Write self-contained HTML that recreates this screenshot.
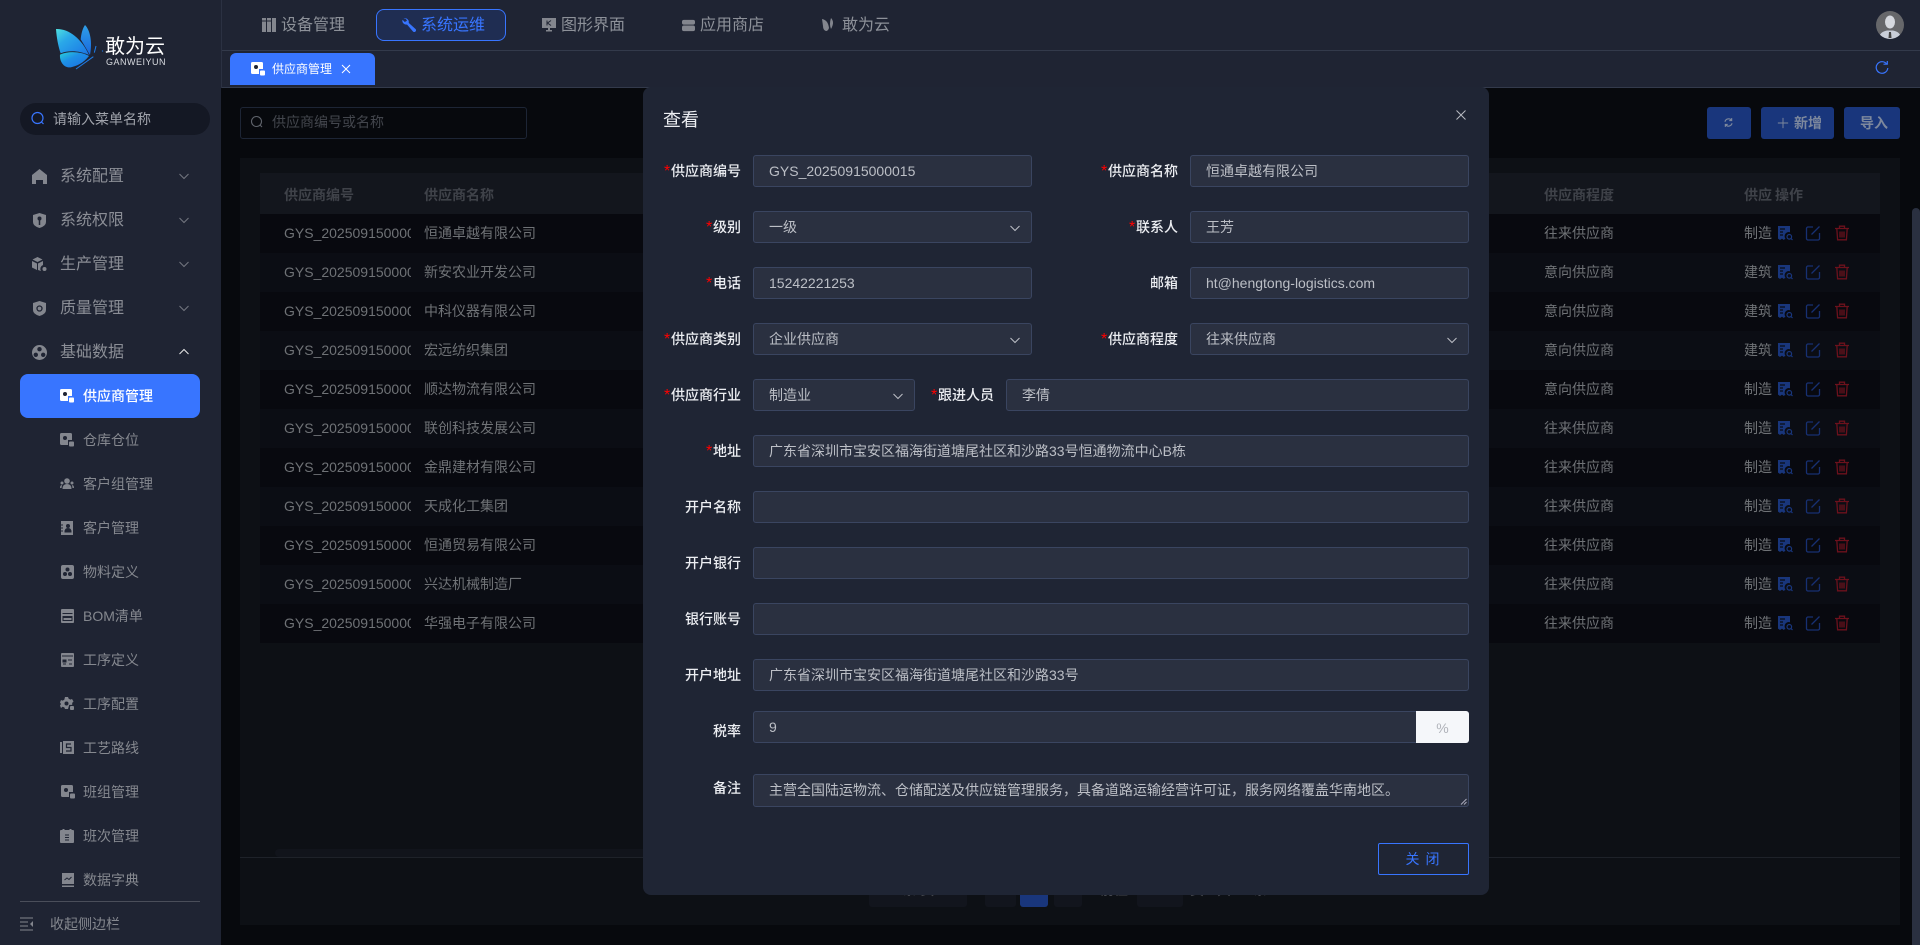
<!DOCTYPE html>
<html lang="zh">
<head>
<meta charset="utf-8">
<title>供应商管理</title>
<style>
*{box-sizing:border-box;margin:0;padding:0}
html,body{width:1920px;height:945px;overflow:hidden;background:#07090d}
body{position:relative;font-family:"Liberation Sans","WenQuanYi Zen Hei","Noto Sans CJK SC",sans-serif;font-size:14px}
.a{position:absolute;white-space:nowrap}
.t{position:absolute;white-space:nowrap;line-height:20px}
#side{position:absolute;left:0;top:0;width:221px;height:945px;background:#1f2433}
#top{position:absolute;left:221px;top:0;width:1699px;height:88px;background:#1f2433}
.m1{color:#8b8e96;font-size:16px;left:60px}
.m2{color:#85888f;font-size:14px;left:83px}
.nav{font-size:16px;color:#8d9199;top:16px}
svg{position:absolute;display:block}
.ic{fill:#83868e}
.row{position:absolute;left:260px;width:1620px;height:39px}
.c1,.c2,.c3,.c4{position:absolute;top:9px;line-height:20px;color:#6f7276;white-space:nowrap;overflow:hidden}
.c1{left:24px;width:127px}
.c2{left:164px}
.c3{left:1284px}
.c4{left:1484px;width:28px}
.th{position:absolute;top:185px;font-weight:700;color:#3f4249;line-height:20px;white-space:nowrap}
.f{position:absolute;height:32px;background:#2a3040;border:1px solid #3a4560;border-radius:3px;color:#bcbfc6;line-height:30px;padding-left:15px;white-space:nowrap}
.l{position:absolute;color:#eceef2;line-height:20px;text-align:right;white-space:nowrap;font-weight:500}
.l b{display:inline-block;width:7px;color:#f00;font-weight:400;font-size:16px;line-height:14px;text-align:left}
.ch{position:absolute;right:10px;top:10px}
</style>
</head>
<body>
<svg width="0" height="0" style="position:absolute">
<defs>
<symbol id="doc" viewBox="0 0 16 16"><path d="M1 1h12v6.200a4.200 4.200 0 0 0-3.400 7.600L8.400 13.600 6.800 15 5 13.600 3 15 1 13.600z" fill="#19367c"/><path d="M3 4h5M3 7h3M3 10h3" stroke="#0a0d14" stroke-width="1.200"/><circle cx="12.300" cy="11.800" r="2.300" fill="none" stroke="#19367c" stroke-width="1.200"/><path d="M14 13.500l1.500 1.500" stroke="#19367c" stroke-width="1.200"/></symbol>
<symbol id="edit" viewBox="0 0 16 16"><path d="M8 2H3a1.500 1.500 0 0 0-1.500 1.500v10A1.500 1.500 0 0 0 3 15h10a1.500 1.500 0 0 0 1.500-1.500V8M6.500 9.500L14.500 1.500" fill="none" stroke="#173072" stroke-width="1.300"/></symbol>
<symbol id="del" viewBox="0 0 16 16"><path d="M1 3.500h14M5.500 3.500V1.200h5v2.300M2.800 3.500l.8 11.300h8.800l.8-11.300M6 6.500v6M8 6.500v6M10 6.500v6" fill="none" stroke="#6c111c" stroke-width="1.300"/></symbol>
<symbol id="sub" viewBox="0 0 14 14"><path d="M1.500 0h9A1.500 1.500 0 0 1 12 1.500V7H8v5H1.500A1.500 1.500 0 0 1 0 10.500v-9A1.500 1.500 0 0 1 1.500 0z" fill="currentColor"/><circle cx="5" cy="5" r="2" fill="#1f2433"/><rect x="9" y="8.500" width="5" height="5" rx="1" fill="currentColor"/></symbol>
<symbol id="down" viewBox="0 0 12 12"><path d="M1.500 4l4.500 4.500L10.500 4" fill="none" stroke="currentColor" stroke-width="1"/></symbol>
</defs>
</svg>

<!-- content area -->
<div class="a" style="left:240px;top:107px;width:287px;height:32px;border:1px solid #1d2535;border-radius:3px"></div>
<svg style="left:250px;top:115px" width="14" height="14" viewBox="0 0 14 14"><circle cx="6.500" cy="6.500" r="5" fill="none" stroke="#5f636b" stroke-width="1.100"/><path d="M10 10l2 2" stroke="#5f636b" stroke-width="1.100"/></svg>
<div class="t" style="left:272px;top:112px;color:#43464d">供应商编号或名称</div>
<div class="a" style="left:1707px;top:107px;width:44px;height:32px;background:#19367c;border-radius:3px"></div>
<svg style="left:1723px;top:117px" width="11" height="11" viewBox="0 0 14 14"><path d="M2.500 6a4.700 4.700 0 0 1 8.300-1.800M11.500 8a4.700 4.700 0 0 1-8.300 1.800M11 1.500v3H8M3 12.500v-3h3" fill="none" stroke="#7d889d" stroke-width="1.500"/></svg>
<div class="a" style="left:1761px;top:107px;width:73px;height:32px;background:#19367c;border-radius:3px"></div>
<svg style="left:1777px;top:117px" width="12" height="12" viewBox="0 0 14 14"><path d="M7 1v12M1 7h12" stroke="#7d889d" stroke-width="1.100"/></svg>
<div class="t" style="left:1794px;top:113px;color:#7d889d;font-weight:700">新增</div>
<div class="a" style="left:1844px;top:107px;width:56px;height:32px;background:#19367c;border-radius:3px"></div>
<div class="t" style="left:1860px;top:113px;color:#7d889d;font-weight:700">导入</div>

<div class="a" style="left:240px;top:158px;width:1660px;height:767px;background:#0d1015"></div>
<div class="a" style="left:260px;top:173px;width:1620px;height:41px;background:#13161d"></div>
<div class="th" style="left:284px">供应商编号</div>
<div class="th" style="left:424px">供应商名称</div>
<div class="th" style="left:1544px">供应商程度</div>
<div class="th" style="left:1744px;width:28px;overflow:hidden">供应商行业</div>
<div class="th" style="left:1775px">操作</div>

<div class="row" style="top:214px;background:#08090f"><div class="c1">GYS_20250915000015</div><div class="c2">恒通卓越有限公司</div><div class="c3">往来供应商</div><div class="c4">制造业</div></div>
<div class="row" style="top:253px;background:#0b0d14"><div class="c1">GYS_20250915000014</div><div class="c2">新安农业开发公司</div><div class="c3">意向供应商</div><div class="c4">建筑业</div></div>
<div class="row" style="top:292px;background:#08090f"><div class="c1">GYS_20250915000013</div><div class="c2">中科仪器有限公司</div><div class="c3">意向供应商</div><div class="c4">建筑业</div></div>
<div class="row" style="top:331px;background:#0b0d14"><div class="c1">GYS_20250915000012</div><div class="c2">宏远纺织集团</div><div class="c3">意向供应商</div><div class="c4">建筑业</div></div>
<div class="row" style="top:370px;background:#08090f"><div class="c1">GYS_20250915000011</div><div class="c2">顺达物流有限公司</div><div class="c3">意向供应商</div><div class="c4">制造业</div></div>
<div class="row" style="top:409px;background:#0b0d14"><div class="c1">GYS_20250915000010</div><div class="c2">联创科技发展公司</div><div class="c3">往来供应商</div><div class="c4">制造业</div></div>
<div class="row" style="top:448px;background:#08090f"><div class="c1">GYS_20250915000009</div><div class="c2">金鼎建材有限公司</div><div class="c3">往来供应商</div><div class="c4">制造业</div></div>
<div class="row" style="top:487px;background:#0b0d14"><div class="c1">GYS_20250915000008</div><div class="c2">天成化工集团</div><div class="c3">往来供应商</div><div class="c4">制造业</div></div>
<div class="row" style="top:526px;background:#08090f"><div class="c1">GYS_20250915000007</div><div class="c2">恒通贸易有限公司</div><div class="c3">往来供应商</div><div class="c4">制造业</div></div>
<div class="row" style="top:565px;background:#0b0d14"><div class="c1">GYS_20250915000006</div><div class="c2">兴达机械制造厂</div><div class="c3">往来供应商</div><div class="c4">制造业</div></div>
<div class="row" style="top:604px;background:#08090f"><div class="c1">GYS_20250915000005</div><div class="c2">华强电子有限公司</div><div class="c3">往来供应商</div><div class="c4">制造业</div></div>

<svg style="left:1777px;top:225px" width="16" height="16"><use href="#doc"/></svg><svg style="left:1805px;top:225px" width="16" height="16"><use href="#edit"/></svg><svg style="left:1834px;top:225px" width="16" height="16"><use href="#del"/></svg>
<svg style="left:1777px;top:264px" width="16" height="16"><use href="#doc"/></svg><svg style="left:1805px;top:264px" width="16" height="16"><use href="#edit"/></svg><svg style="left:1834px;top:264px" width="16" height="16"><use href="#del"/></svg>
<svg style="left:1777px;top:303px" width="16" height="16"><use href="#doc"/></svg><svg style="left:1805px;top:303px" width="16" height="16"><use href="#edit"/></svg><svg style="left:1834px;top:303px" width="16" height="16"><use href="#del"/></svg>
<svg style="left:1777px;top:342px" width="16" height="16"><use href="#doc"/></svg><svg style="left:1805px;top:342px" width="16" height="16"><use href="#edit"/></svg><svg style="left:1834px;top:342px" width="16" height="16"><use href="#del"/></svg>
<svg style="left:1777px;top:381px" width="16" height="16"><use href="#doc"/></svg><svg style="left:1805px;top:381px" width="16" height="16"><use href="#edit"/></svg><svg style="left:1834px;top:381px" width="16" height="16"><use href="#del"/></svg>
<svg style="left:1777px;top:420px" width="16" height="16"><use href="#doc"/></svg><svg style="left:1805px;top:420px" width="16" height="16"><use href="#edit"/></svg><svg style="left:1834px;top:420px" width="16" height="16"><use href="#del"/></svg>
<svg style="left:1777px;top:459px" width="16" height="16"><use href="#doc"/></svg><svg style="left:1805px;top:459px" width="16" height="16"><use href="#edit"/></svg><svg style="left:1834px;top:459px" width="16" height="16"><use href="#del"/></svg>
<svg style="left:1777px;top:498px" width="16" height="16"><use href="#doc"/></svg><svg style="left:1805px;top:498px" width="16" height="16"><use href="#edit"/></svg><svg style="left:1834px;top:498px" width="16" height="16"><use href="#del"/></svg>
<svg style="left:1777px;top:537px" width="16" height="16"><use href="#doc"/></svg><svg style="left:1805px;top:537px" width="16" height="16"><use href="#edit"/></svg><svg style="left:1834px;top:537px" width="16" height="16"><use href="#del"/></svg>
<svg style="left:1777px;top:576px" width="16" height="16"><use href="#doc"/></svg><svg style="left:1805px;top:576px" width="16" height="16"><use href="#edit"/></svg><svg style="left:1834px;top:576px" width="16" height="16"><use href="#del"/></svg>
<svg style="left:1777px;top:615px" width="16" height="16"><use href="#doc"/></svg><svg style="left:1805px;top:615px" width="16" height="16"><use href="#edit"/></svg><svg style="left:1834px;top:615px" width="16" height="16"><use href="#del"/></svg>

<div class="a" style="left:275px;top:849px;width:900px;height:8px;background:#11141b;border-radius:4px"></div>
<div class="a" style="left:240px;top:857px;width:1660px;height:1px;background:#1e2229"></div>
<!-- pagination peeking under modal -->
<div class="a" style="left:869px;top:875px;width:98px;height:32px;background:#12151d;border-radius:3px"></div>
<div class="a" style="left:985px;top:875px;width:31px;height:32px;background:#12151d;border-radius:3px"></div>
<div class="a" style="left:1020px;top:875px;width:28px;height:32px;background:#19367c;border-radius:3px"></div>
<div class="a" style="left:1054px;top:875px;width:28px;height:32px;background:#12151d;border-radius:3px"></div>
<div class="a" style="left:1137px;top:875px;width:46px;height:32px;background:#12151d;border-radius:3px"></div>
<div class="t" style="left:887px;top:880px;color:#45484f">20条/页</div>
<div class="t" style="left:1100px;top:880px;color:#45484f">前往</div>
<div class="t" style="left:1190px;top:880px;color:#45484f">页</div>
<div class="t" style="left:1217px;top:880px;color:#45484f">共 11 条</div>
<!-- scrollbar -->
<div class="a" style="left:1912px;top:208px;width:8px;height:737px;background:#2a3040;border-radius:4px 4px 0 0"></div>

<!-- top bar -->
<div id="top"></div>
<div class="a" style="left:221px;top:50px;width:1699px;height:1px;background:#333a4b"></div>
<div class="a" style="left:221px;top:87px;width:1699px;height:1px;background:#333a4b"></div>
<div class="a" style="left:221px;top:0;width:1px;height:88px;background:#2b3142"></div>

<svg class="ic" style="left:262px;top:18px" width="14" height="14" viewBox="0 0 14 14"><rect x="0" y="0" width="4" height="14"/><rect x="5" y="0" width="4" height="14"/><rect x="10" y="0" width="4" height="14"/><path d="M0 3h4M5 3h4" stroke="#1f2433"/></svg>
<div class="t nav" style="left:281px">设备管理</div>
<div class="a" style="left:376px;top:9px;width:130px;height:32px;background:#1f2d52;border:1px solid #3875ff;border-radius:8px"></div>
<svg style="left:402px;top:18px" width="14" height="14" viewBox="0 0 14 14"><path d="M1.500 0.500a3.800 3.800 0 0 1 5.200 4.400L13.500 11a1.700 1.700 0 0 1-2.500 2.500L5 6.500A3.800 3.800 0 0 1 .5 1.800L2.800 4 5 2.800 3.800 .8z" fill="#3875ff"/></svg>
<div class="t nav" style="left:421px;color:#3875ff">系统运维</div>
<svg class="ic" style="left:542px;top:18px" width="14" height="14" viewBox="0 0 14 14"><path d="M0 0h14v10H8v2h2v1.500H4V12h2v-2H0z"/><path d="M5 2.500v5M9 2.500L5.500 5 9 7.500" stroke="#1f2433" fill="none"/></svg>
<div class="t nav" style="left:561px">图形界面</div>
<svg class="ic" style="left:682px;top:19px" width="13" height="13" viewBox="0 0 14 14"><rect x="0" y="1" width="14" height="5" rx="2"/><rect x="0" y="7" width="14" height="6" rx="2"/></svg>
<div class="t nav" style="left:700px">应用商店</div>
<svg class="ic" style="left:822px;top:18px" width="14" height="14" viewBox="0 0 14 14"><path d="M0 1q6 1 7 9-1 3-3 3-3-1-3-5zM9 0q4 4 0 11-2-5 0-11z"/></svg>
<div class="t nav" style="left:842px">敢为云</div>

<svg style="left:1876px;top:11px" width="28" height="28" viewBox="0 0 28 28"><clipPath id="av"><circle cx="14" cy="14" r="14"/></clipPath><g clip-path="url(#av)"><rect width="28" height="28" fill="#66676a"/><ellipse cx="14" cy="11" rx="5" ry="6.500" fill="#d5d8de"/><path d="M3 28q0-7 8-8.500h6q8 1.500 8 8.500z" fill="#c9ced8"/><path d="M13 21h2l.5 6h-3z" fill="#444"/></g></svg>

<!-- tab -->
<div class="a" style="left:230px;top:53px;width:145px;height:32px;background:#3875ff;border-radius:6px 6px 0 0"></div>
<svg style="left:251px;top:62px;color:#fff" width="14" height="14"><use href="#sub"/></svg>
<div class="t" style="left:272px;top:59px;font-size:12px;color:#fff">供应商管理</div>
<svg style="left:341px;top:64px" width="10" height="10" viewBox="0 0 10 10"><path d="M1 1l8 8M9 1l-8 8" stroke="#fff" stroke-width="1"/></svg>
<svg style="left:1875px;top:61px" width="14" height="14" viewBox="0 0 14 14"><path d="M11.800 3.200A5.800 5.800 0 1 0 12.800 7" fill="none" stroke="#3875ff" stroke-width="1.200"/><path d="M8.500 3.200h3.800V0" fill="none" stroke="#3875ff" stroke-width="1.200"/></svg>

<!-- sidebar -->
<div id="side"></div>
<svg style="left:40px;top:10px" width="150" height="70" viewBox="0 0 450 210">
<defs>
<linearGradient id="g1" x1="0" y1="0" x2="1" y2="1"><stop offset="0" stop-color="#4fe0e0"/><stop offset=".35" stop-color="#2aa8e8"/><stop offset="1" stop-color="#1a74e6"/></linearGradient>
<linearGradient id="g2" x1="0" y1="0" x2="0" y2="1"><stop offset="0" stop-color="#2f9fe8"/><stop offset="1" stop-color="#1868de"/></linearGradient>
<linearGradient id="g3" x1="0" y1="0" x2="1" y2="1"><stop offset="0" stop-color="#2ad0d8"/><stop offset=".4" stop-color="#1e90e6"/><stop offset="1" stop-color="#1a6de0"/></linearGradient>
</defs>
<path d="M135 45C150 60 158 95 150 135C140 118 130 100 122 88C124 70 128 55 135 45z" fill="url(#g2)"/>
<path d="M48 57C85 55 125 85 147 135C120 122 85 120 62 130C55 110 50 85 48 57z" fill="url(#g1)"/>
<path d="M60 134C85 122 125 125 147 138C130 160 110 168 92 172C72 175 58 155 60 134z" fill="url(#g3)"/>
<path d="M108 177L160 140M168 108L163 128M186 124l3-2" stroke="#1f7de8" stroke-width="3" fill="none"/>
</svg>
<div class="t" style="left:105px;top:35px;font-size:20px;line-height:24px;color:#fff">敢为云</div>
<div class="t" style="left:106px;top:56px;font-size:9px;line-height:12px;color:#d8dbe0;letter-spacing:.5px">GANWEIYUN</div>

<div class="a" style="left:20px;top:103px;width:190px;height:32px;background:#141824;border-radius:16px"></div>
<svg style="left:31px;top:111px" width="14" height="15" viewBox="0 0 14 15"><circle cx="6.500" cy="7" r="5.500" fill="none" stroke="#3875ff" stroke-width="1.200"/><path d="M10.500 11l2 2" stroke="#3875ff" stroke-width="1.200"/></svg>
<div class="t" style="left:53px;top:109px;color:#a0a3ab">请输入菜单名称</div>

<svg class="ic" style="left:32px;top:169px" width="15" height="15" viewBox="0 0 15 15"><path d="M7.500 0L15 6v9h-4v-4H4v4H0V6z"/></svg>
<div class="t m1" style="top:167px">系统配置</div>
<svg class="ic" style="left:32px;top:213px" width="15" height="15" viewBox="0 0 15 15"><path d="M7.500 0l6.500 2v7q0 4-6.500 6Q1 13 1 9V2z"/><circle cx="7.500" cy="5.500" r="2" fill="#1f2433"/><path d="M7.500 7v5" stroke="#1f2433" stroke-width="1.500"/></svg>
<div class="t m1" style="top:211px">系统权限</div>
<svg class="ic" style="left:32px;top:257px" width="15" height="15" viewBox="0 0 15 15"><path d="M5.500 0l5 2.500-5 2.500-5-2.500zM0 4l5 2.500V13l-5-2.500zM6 6.500L11 4v4a4 4 0 0 0-2 6l-3-1z"/><circle cx="12.500" cy="12" r="2"/></svg>
<div class="t m1" style="top:255px">生产管理</div>
<svg class="ic" style="left:32px;top:301px" width="15" height="15" viewBox="0 0 15 15"><path d="M7.500 0l6.500 2v7q0 4-6.500 6Q1 13 1 9V2z"/><circle cx="7.500" cy="7.500" r="2.500" fill="none" stroke="#1f2433" stroke-width="1.300"/></svg>
<div class="t m1" style="top:299px">质量管理</div>
<svg class="ic" style="left:32px;top:345px" width="15" height="15" viewBox="0 0 15 15"><circle cx="7.500" cy="7.500" r="7.500"/><circle cx="7.500" cy="4.200" r="2.200" fill="#1f2433"/><circle cx="3.800" cy="9.800" r="2.200" fill="#1f2433"/><circle cx="11.200" cy="9.800" r="2.200" fill="#1f2433"/></svg>
<div class="t m1" style="top:343px">基础数据</div>

<svg style="left:178px;top:170px;color:#747780" width="12" height="12"><use href="#down"/></svg>
<svg style="left:178px;top:214px;color:#747780" width="12" height="12"><use href="#down"/></svg>
<svg style="left:178px;top:258px;color:#747780" width="12" height="12"><use href="#down"/></svg>
<svg style="left:178px;top:302px;color:#747780" width="12" height="12"><use href="#down"/></svg>
<svg style="left:178px;top:346px" width="12" height="12" viewBox="0 0 12 12"><path d="M1.500 8L6 3.500 10.500 8" fill="none" stroke="#e8e8e8" stroke-width="1"/></svg>

<div class="a" style="left:20px;top:374px;width:180px;height:44px;background:#3875ff;border-radius:8px"></div>
<svg style="left:60px;top:389px;color:#fff" width="14" height="14"><use href="#sub"/></svg>
<div class="t" style="left:83px;top:386px;color:#fff;font-weight:500">供应商管理</div>

<svg style="left:60px;top:433px;color:#83868e" width="14" height="14"><use href="#sub"/></svg><div class="t m2" style="top:430px">仓库仓位</div>
<svg class="ic" style="left:60px;top:477px" width="14" height="14" viewBox="0 0 14 14"><circle cx="7" cy="4" r="2.800"/><path d="M2.500 12q0-5 4.500-5t4.500 5z"/><circle cx="2" cy="6" r="1.500"/><circle cx="12" cy="6" r="1.500"/><path d="M0 11q0-3 2-3l-.5 3zM14 11q0-3-2-3l.5 3z"/></svg><div class="t m2" style="top:474px">客户组管理</div>
<svg class="ic" style="left:60px;top:521px" width="14" height="14" viewBox="0 0 14 14"><path d="M1 0h12v14H1z"/><circle cx="8" cy="5" r="2" fill="#1f2433"/><path d="M5 11q0-3.500 3-3.500t3 3.500zM0 4h3M0 7h3M0 10h3" stroke="#1f2433" fill="#1f2433"/></svg><div class="t m2" style="top:518px">客户管理</div>
<svg class="ic" style="left:61px;top:565px" width="13" height="14" viewBox="0 0 13 14"><rect width="13" height="14" rx="2"/><circle cx="6.500" cy="4.500" r="2" fill="#1f2433"/><circle cx="4" cy="9" r="2" fill="#1f2433"/><circle cx="9" cy="9" r="2" fill="#1f2433"/></svg><div class="t m2" style="top:562px">物料定义</div>
<svg class="ic" style="left:61px;top:609px" width="13" height="14" viewBox="0 0 13 14"><rect width="13" height="14" rx="1"/><path d="M1.500 4h10v1h-10zM1.500 7h10v5h-10z" fill="#1f2433"/><path d="M2.500 9h8v2h-8z"/></svg><div class="t m2" style="top:606px">BOM清单</div>
<svg class="ic" style="left:61px;top:653px" width="13" height="14" viewBox="0 0 13 14"><rect width="13" height="14" rx="1"/><path d="M1 3h11M2 7h3v2H2zM2 11h3M7 7h4M8 11h3" stroke="#1f2433" fill="#1f2433"/></svg><div class="t m2" style="top:650px">工序定义</div>
<svg class="ic" style="left:60px;top:697px" width="14" height="14" viewBox="0 0 14 14"><path d="M5 0h3l.7 1.800 1.800.8L12 2l1.500 2.500-1.300 1.400v2h-3L8 12H5l-.7-1.600-1.800-.7L1 11 0 8.500 1 7 0 5.500 1 3l1.600.6 1.700-.8z"/><circle cx="6.500" cy="6.500" r="2" fill="#1f2433"/><rect x="10" y="9" width="4" height="4" rx="1"/></svg><div class="t m2" style="top:694px">工序配置</div>
<svg class="ic" style="left:60px;top:741px" width="14" height="14" viewBox="0 0 14 14"><path d="M3 0h11v13H3zM0 1h2v11H0z"/><path d="M11 3H6.500v3.500H11V10H6" fill="none" stroke="#1f2433" stroke-width="1.200"/></svg><div class="t m2" style="top:738px">工艺路线</div>
<svg style="left:61px;top:785px;color:#83868e" width="14" height="14"><use href="#sub"/></svg><div class="t m2" style="top:782px">班组管理</div>
<svg class="ic" style="left:60px;top:829px" width="14" height="14" viewBox="0 0 14 14"><rect y="1" width="14" height="13" rx="1"/><rect x="2.500" width="2" height="3"/><rect x="9.500" width="2" height="3"/><path d="M5 6h4M5 8.500h4M5 11h4" stroke="#1f2433"/></svg><div class="t m2" style="top:826px">班次管理</div>
<svg class="ic" style="left:61px;top:873px" width="13" height="14" viewBox="0 0 13 14"><path d="M1 0h12v11H1zM1 12.500h12V14H1z"/><path d="M3.500 7l2.500-2 2 1.500 2.500-2.500" stroke="#1f2433" fill="none"/></svg><div class="t m2" style="top:870px">数据字典</div>

<div class="a" style="left:20px;top:901px;width:180px;height:1px;background:#4a4e5a"></div>
<svg style="left:20px;top:917px" width="14" height="14" viewBox="0 0 14 14"><path d="M0 1h13M0 5h8M0 9h8M0 13h13" stroke="#83868e" stroke-width="1"/><path d="M13 4v6l-3-3z" fill="#83868e"/></svg>
<div class="t" style="left:50px;top:914px;color:#85888f">收起侧边栏</div>

<!-- modal -->
<div class="a" style="left:643px;top:87px;width:846px;height:808px;background:#1f2534;border-radius:8px"></div>
<div class="t" style="left:663px;top:107px;font-size:18px;line-height:26px;color:#eceef2">查看</div>
<svg style="left:1456px;top:110px" width="10" height="10" viewBox="0 0 10 10"><path d="M.5.5l9 9M9.500.5l-9 9" stroke="#b8bbc2" stroke-width="1"/></svg>

<div class="l" style="right:1179px;top:161px"><b>*</b>供应商编号</div>
<div class="f" style="left:753px;top:155px;width:279px">GYS_20250915000015</div>
<div class="l" style="right:742px;top:161px"><b>*</b>供应商名称</div>
<div class="f" style="left:1190px;top:155px;width:279px">恒通卓越有限公司</div>

<div class="l" style="right:1179px;top:217px"><b>*</b>级别</div>
<div class="f" style="left:753px;top:211px;width:279px">一级<svg class="ch" style="color:#bcbfc6" width="12" height="12"><use href="#down"/></svg></div>
<div class="l" style="right:742px;top:217px"><b>*</b>联系人</div>
<div class="f" style="left:1190px;top:211px;width:279px">王芳</div>

<div class="l" style="right:1179px;top:273px"><b>*</b>电话</div>
<div class="f" style="left:753px;top:267px;width:279px">15242221253</div>
<div class="l" style="right:742px;top:273px">邮箱</div>
<div class="f" style="left:1190px;top:267px;width:279px">ht@hengtong-logistics.com</div>

<div class="l" style="right:1179px;top:329px"><b>*</b>供应商类别</div>
<div class="f" style="left:753px;top:323px;width:279px">企业供应商<svg class="ch" style="color:#bcbfc6" width="12" height="12"><use href="#down"/></svg></div>
<div class="l" style="right:742px;top:329px"><b>*</b>供应商程度</div>
<div class="f" style="left:1190px;top:323px;width:279px">往来供应商<svg class="ch" style="color:#bcbfc6" width="12" height="12"><use href="#down"/></svg></div>

<div class="l" style="right:1179px;top:385px"><b>*</b>供应商行业</div>
<div class="f" style="left:753px;top:379px;width:162px">制造业<svg class="ch" style="color:#bcbfc6" width="12" height="12"><use href="#down"/></svg></div>
<div class="l" style="right:926px;top:385px"><b>*</b>跟进人员</div>
<div class="f" style="left:1006px;top:379px;width:463px">李倩</div>

<div class="l" style="right:1179px;top:441px"><b>*</b>地址</div>
<div class="f" style="left:753px;top:435px;width:716px">广东省深圳市宝安区福海街道塘尾社区和沙路33号恒通物流中心B栋</div>
<div class="l" style="right:1179px;top:497px">开户名称</div>
<div class="f" style="left:753px;top:491px;width:716px"></div>
<div class="l" style="right:1179px;top:553px">开户银行</div>
<div class="f" style="left:753px;top:547px;width:716px"></div>
<div class="l" style="right:1179px;top:609px">银行账号</div>
<div class="f" style="left:753px;top:603px;width:716px"></div>
<div class="l" style="right:1179px;top:665px">开户地址</div>
<div class="f" style="left:753px;top:659px;width:716px">广东省深圳市宝安区福海街道塘尾社区和沙路33号</div>

<div class="l" style="right:1179px;top:721px">税率</div>
<div class="f" style="left:753px;top:711px;width:716px">9</div>
<div class="a" style="left:1416px;top:711px;width:53px;height:32px;background:#f5f7fa;border-radius:0 3px 3px 0;color:#b0b3ba;text-align:center;line-height:34px">%</div>

<div class="l" style="right:1179px;top:778px">备注</div>
<div class="f" style="left:753px;top:774px;width:716px;height:33px">主营全国陆运物流、仓储配送及供应链管理服务，具备道路运输经营许可证，服务网络覆盖华南地区。<svg style="right:1px;bottom:1px" width="7" height="7" viewBox="0 0 7 7"><path d="M6.500 1L1 6.500M6.500 4L4 6.500" stroke="#aab" stroke-width="1"/></svg></div>

<div class="a" style="left:1378px;top:843px;width:91px;height:32px;border:1px solid #3875ff;border-radius:2px;color:#3875ff;text-align:center;line-height:30px;letter-spacing:6px;padding-left:4px">关闭</div>
</body>
</html>
